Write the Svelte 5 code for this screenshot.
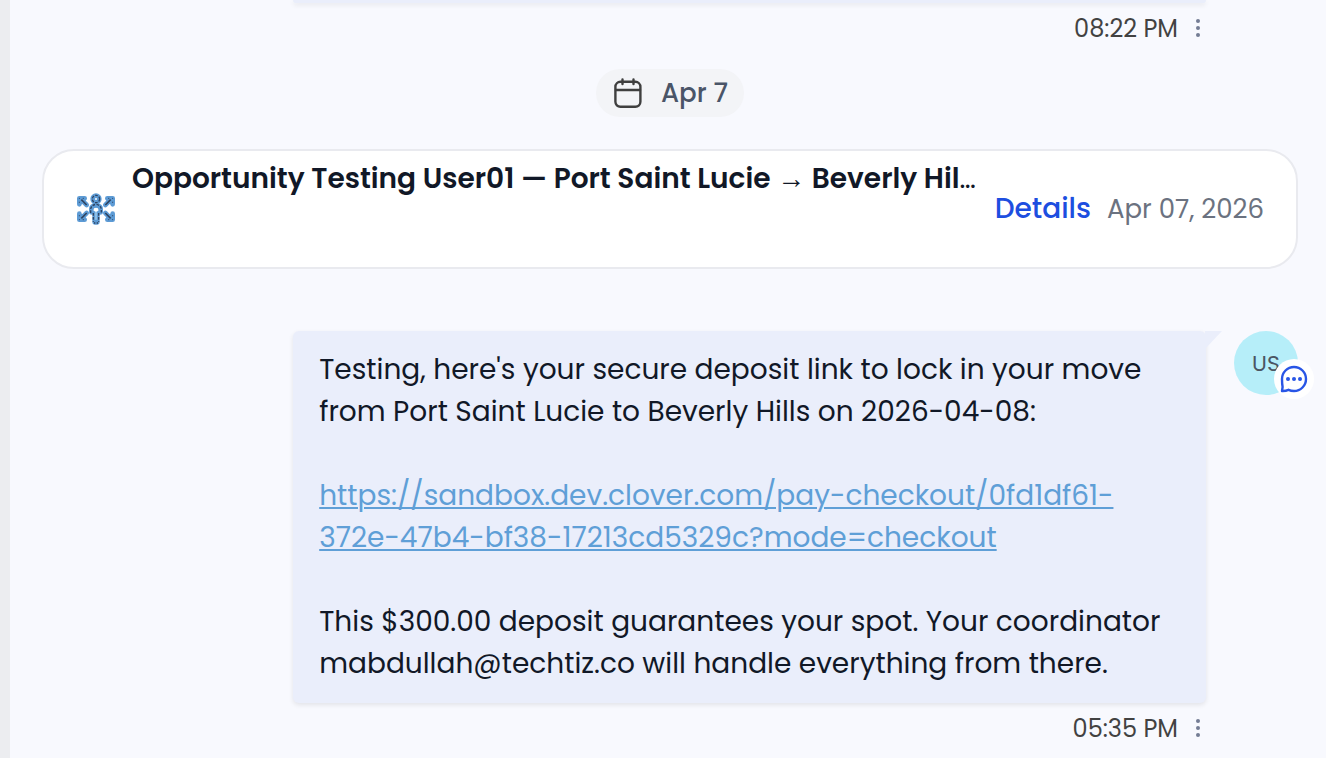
<script lang="ts">
	const paymentUrl = 'https://sandbox.dev.clover.com/pay-checkout/0fd1df61-372e-47b4-bf38-17213cd5329c?mode=checkout';

	// people icon: arrow shafts and heads, one per corner
	const shafts = ['M8 10 L16 18', 'M52 10 L44 18', 'M16 30 L8 38', 'M44 30 L52 38'];
	const heads = [
		'M5 17 V8 H13 L5 16 Z',
		'M55 17 V8 H47 L55 16 Z',
		'M5 31 V40 H13 L5 32 Z',
		'M55 31 V40 H47 L55 32 Z'
	];
</script>

{#snippet timeRow(time: string)}
	<div class="meta">
		<time>{time}</time>
		<button class="more" aria-label="Message options">
			<svg width="6" height="20" viewBox="0 0 6 20">
				<circle cx="3" cy="3" r="2" />
				<circle cx="3" cy="10" r="2" />
				<circle cx="3" cy="17" r="2" />
			</svg>
		</button>
	</div>
{/snippet}

<main class="thread">
	<div class="message">
		<div class="body">
			<div class="bubble previous"></div>
			{@render timeRow('08:22 PM')}
		</div>
	</div>

	<div class="day">
		<svg width="32" height="32" viewBox="0 0 32 32" fill="none" stroke="#3f3f3f" stroke-width="2.4" stroke-linecap="round">
			<rect x="3.4" y="4.8" width="25" height="25" rx="5" />
			<path d="M4 13 H28 M10.5 2.5 V7 M21.5 2.5 V7" />
		</svg>
		<span>Apr 7</span>
	</div>

	<section class="card">
		<svg class="people" width="40" height="32" viewBox="0 0 60 48">
			<g fill="none" stroke="#5d9bd5" stroke-width="7" stroke-linecap="round" stroke-linejoin="round">
				{#each heads as d}
					<path {d} fill="#5d9bd5" />
				{/each}
				{#each shafts as d}
					<path {d} />
				{/each}
				<circle cx="30" cy="9" r="5" />
				<path d="M23 29 V24 Q23 19 30 19 Q37 19 37 24 V29 M28 30 V44 H32 V30" />
			</g>
			<g fill="none" stroke="#2f4360" stroke-width="2" stroke-dasharray="4 2">
				{#each shafts as d}
					<path {d} stroke-width="2.4" stroke-dasharray="none" />
				{/each}
				<path d="M5 15 V8 H12 M55 15 V8 H48 M5 33 V40 H12 M55 33 V40 H48" stroke-width="1.2" stroke-dasharray="2 4" />
				<circle cx="30" cy="9" r="5.5" />
				<path d="M22 30 V24 Q23 18 30 17 Q37 18 38 24 V30 M26 30 V43 M34 30 V43" />
				<path d="M27 45 H33" stroke-dasharray="2 2" />
			</g>
			<path d="M30 26 V40" stroke="#a9d2ee" stroke-width="2" />
			<circle cx="30" cy="25" r="3" fill="#fff" />
		</svg>
		<h2>Opportunity Testing User01 — Port Saint Lucie → Beverly Hil<span>…</span></h2>
		<a class="details" href="#details">Details</a>
		<time>Apr 07, 2026</time>
	</section>

	<div class="message">
		<div class="body">
			<div class="bubble">
				<p>Testing, here's your secure deposit link to lock in your move from Port Saint Lucie to Beverly Hills on 2026-04-08:</p>
				<p><a href={paymentUrl}>{paymentUrl}</a></p>
				<p>This $300.00 deposit guarantees your spot. Your coordinator mabdullah@techtiz.co will handle everything from there.</p>
				<svg class="tail" width="17" height="18" viewBox="0 0 17 18"><path d="M0 0 H17 L0 18 Z" fill="#eaeefb" /></svg>
			</div>
			{@render timeRow('05:35 PM')}
		</div>
		<div class="avatar">
			US
			<span class="badge">
				<svg width="28" height="28" viewBox="0 0 28 28">
					<path d="M2 26 L2.6 22 Q2 19 2 14 A12 12 0 1 1 14 26 Q11 26 8.5 24.8 Q5.5 26.2 2 26 Z" fill="none" stroke="#2855e6" stroke-width="2.4" stroke-linejoin="round" />
					<g fill="#2855e6">
						<circle cx="8" cy="14" r="2" />
						<circle cx="14" cy="14" r="2" />
						<circle cx="20" cy="14" r="2" />
					</g>
				</svg>
			</span>
		</div>
	</div>
</main>

<style>
	:global(body) {
		margin: 0;
		background: #f8f9fe;
	}
	.thread {
		box-sizing: border-box;
		min-height: 100vh;
		padding: 0 28px 0 32px;
		border-left: 10px solid #ecedf0;
		font-family: Poppins, "Liberation Sans", sans-serif;
		color: #111827;
	}
	.message {
		display: flex;
		gap: 28px;
		padding-left: 20%;
	}
	.body {
		flex: 1;
		min-width: 0;
	}
	.message:first-child {
		padding-right: 92px;
	}
	.bubble {
		position: relative;
		padding: 18px 26px;
		border-radius: 6px;
		background: #eaeefb;
		box-shadow: 0 2px 5px rgba(0, 0, 0, 0.09);
		font-size: 28px;
		line-height: 42px;
	}
	.bubble.previous {
		height: 3px;
		padding: 0;
		border-radius: 0 0 6px 6px;
	}
	.bubble p {
		margin: 0 0 42px;
	}
	.bubble p:last-of-type {
		margin-bottom: 0;
	}
	.bubble a {
		color: #5f9fd7;
		text-underline-offset: 2px;
		text-decoration-thickness: 2px;
	}
	.tail {
		position: absolute;
		top: 0;
		right: -16px;
	}
	.meta {
		display: flex;
		justify-content: flex-end;
		align-items: center;
		gap: 17px;
		height: 50px;
		padding-right: 5px;
		color: #424242;
		font-size: 24px;
	}
	.more {
		display: flex;
		padding: 0;
		border: 0;
		background: none;
		fill: #747d94;
		cursor: pointer;
	}
	.day {
		display: flex;
		align-items: center;
		gap: 17px;
		box-sizing: border-box;
		width: fit-content;
		height: 48px;
		margin: 16px auto 32px;
		padding: 0 16px;
		border-radius: 24px;
		background: #f3f4f7;
		color: #4a5568;
		font-size: 26px;
		font-weight: 500;
	}
	.card {
		display: flex;
		align-items: center;
		box-sizing: border-box;
		height: 120px;
		margin-bottom: 62px;
		padding: 0 32px;
		border: 2px solid #e9eaef;
		border-radius: 32px;
		background: #fff;
	}
	.people {
		flex: none;
		margin-right: 16px;
	}
	h2 {
		flex: 1;
		align-self: flex-start;
		min-width: 0;
		margin: 7px 16px 0 0;
		overflow: hidden;
		white-space: nowrap;
		font-family: Poppins, "Liberation Serif", serif;
		font-size: 28px;
		font-weight: 600;
		line-height: 42px;
	}
	h2 span {
		font-weight: 400;
	}
	.details {
		margin-right: 16px;
		color: #1d4ee0;
		font-size: 28px;
		font-weight: 500;
		text-decoration: none;
	}
	.card time {
		color: #6b7280;
		font-size: 26px;
		white-space: nowrap;
	}
	.avatar {
		position: relative;
		flex: none;
		display: flex;
		align-items: center;
		justify-content: center;
		width: 64px;
		height: 64px;
		border-radius: 50%;
		background: #b6eef9;
		color: #4b5563;
		font-size: 22px;
	}
	.badge {
		position: absolute;
		right: -16px;
		bottom: -4px;
		display: flex;
		align-items: center;
		justify-content: center;
		width: 40px;
		height: 40px;
		border-radius: 50%;
		background: #fff;
	}
</style>
